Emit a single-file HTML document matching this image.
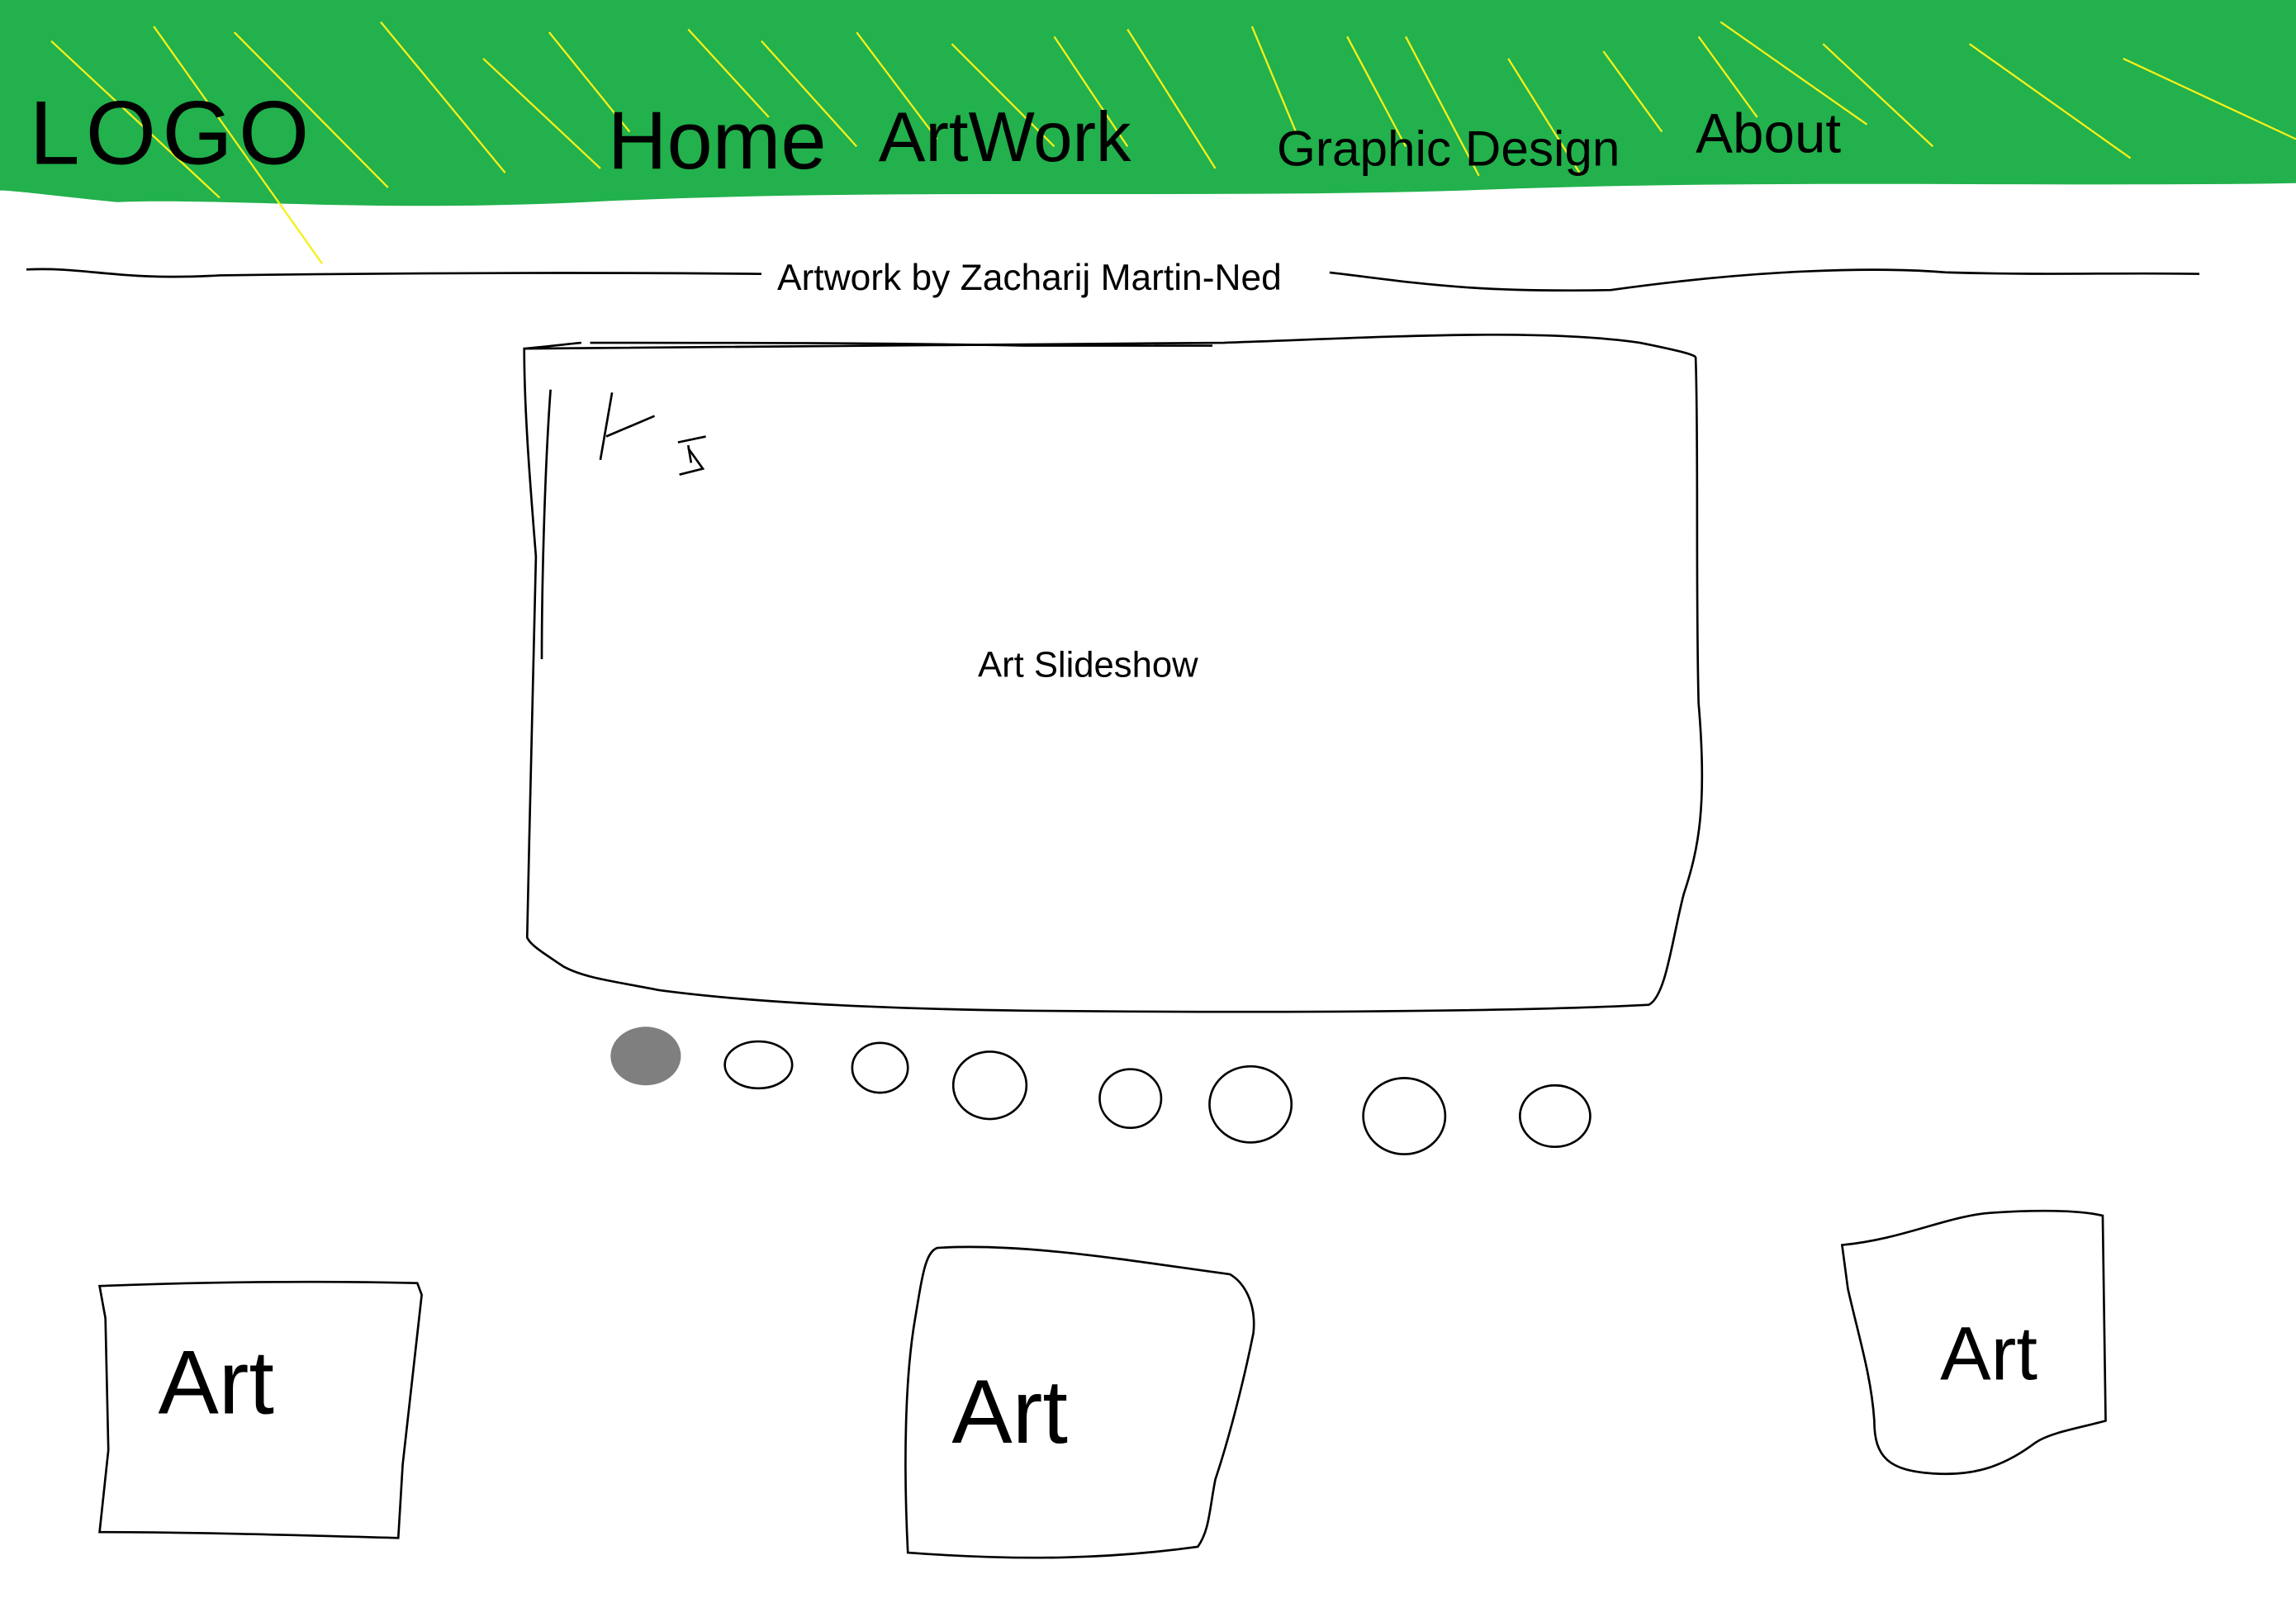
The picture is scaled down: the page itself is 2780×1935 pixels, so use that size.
<!DOCTYPE html>
<html><head><meta charset="utf-8"><style>
html,body{margin:0;padding:0;background:#fff;width:2780px;height:1935px;overflow:hidden}
svg{display:block}
</style></head><body>
<svg width="2780" height="1935" viewBox="0 0 1568 1091" preserveAspectRatio="none" xmlns="http://www.w3.org/2000/svg">
<rect width="1568" height="1091" fill="#fff"/>
<path d="M0 0H1568V125C1400 128 1200 122 1000 130C800 136 600 128 400 138C250 145 150 135 80 138C40 134 10 130 0 130Z" fill="#22b14c"/>
<g stroke="#f5f01a" stroke-width="1.3" fill="none">
<path d="M35 28L150 135"/><path d="M105 18L220 180"/><path d="M160 22L265 128"/><path d="M260 15L345 118"/><path d="M330 40L410 115"/>
<path d="M375 22L430 90"/><path d="M470 20L525 80"/><path d="M520 28L585 100"/><path d="M585 22L640 95"/><path d="M650 30L720 100"/>
<path d="M720 25L770 100"/><path d="M770 20L830 115"/><path d="M855 18L885 90"/><path d="M920 25L960 100"/><path d="M960 25L1010 120"/>
<path d="M1030 40L1080 120"/><path d="M1095 35L1135 90"/><path d="M1160 25L1200 80"/><path d="M1245 30L1320 100"/><path d="M1345 30L1455 108"/>
<path d="M1450 40L1568 95"/><path d="M1175 15L1275 85"/>
</g>
<g font-family="Liberation Sans, sans-serif" fill="#000" font-weight="normal">
<text x="20" y="112" font-size="62" letter-spacing="4">LOGO</text>
<text x="415" y="115" font-size="56">Home</text>
<text x="600" y="110" font-size="48">ArtWork</text>
<text x="872" y="113" font-size="34">Graphic Design</text>
<text x="1158" y="104" font-size="38">About</text>
</g>
<g stroke="#000" stroke-width="1.5" fill="none">
<path d="M18 184C60 182 80 192 150 188C300 186 420 186 520 187"/>
<path d="M908 186C960 192 1000 200 1100 198C1200 184 1280 182 1330 186C1400 188 1450 186 1502 187"/>
<path d="M358 238C380 236 395 234 397 234M403 234C500 234 600 234 700 236C760 236 800 236 828 236M836 234C950 230 1050 224 1120 234C1140 238 1158 242 1158 244C1160 300 1158 400 1160 480C1166 550 1160 580 1150 610C1142 640 1138 680 1126 686C1050 690 900 692 700 690C550 688 480 680 450 676C420 670 400 668 385 660C370 650 362 645 360 640C362 550 364 450 366 380C362 330 358 280 358 238Z"/>
<path d="M376 266C372 320 370 400 370 450"/>
<path d="M418 268L410 314M414 298L447 284M463 302L482 298M470 304L472 316M464 324L480 320L470 306"/>
<path d="M68 878C120 876 200 874 285 876L288 884L275 1000L272 1050C200 1048 130 1046 68 1046L74 990L72 900Z"/>
<path d="M640 852C700 848 780 862 840 870C850 876 858 890 856 910C850 940 840 980 830 1010C826 1030 826 1045 818 1056C760 1064 700 1066 620 1060C617 1000 618 940 625 900C630 870 632 855 640 852Z"/>
<path d="M1258 850C1300 846 1330 830 1360 828C1390 826 1420 826 1436 830L1438 970C1420 975 1400 978 1390 985C1370 1000 1350 1008 1320 1006C1290 1004 1280 995 1280 970C1278 940 1270 915 1262 880Z"/>
<ellipse cx="518" cy="727" rx="23" ry="16"/>
<ellipse cx="601" cy="729" rx="19" ry="17"/>
<ellipse cx="676" cy="741" rx="25" ry="23"/>
<ellipse cx="772" cy="750" rx="21" ry="20"/>
<ellipse cx="854" cy="754" rx="28" ry="26"/>
<ellipse cx="959" cy="762" rx="28" ry="26"/>
<ellipse cx="1062" cy="762" rx="24" ry="21"/>
</g>
<ellipse cx="441" cy="721" rx="24" ry="20" fill="#7f7f7f"/>
<g font-family="Liberation Sans, sans-serif" fill="#000">
<text x="703" y="198" font-size="25" text-anchor="middle">Artwork by Zacharij Martin-Ned</text>
<text x="743" y="462" font-size="24.6" text-anchor="middle">Art Slideshow</text>
<text x="108" y="965" font-size="62">Art</text>
<text x="650" y="985" font-size="62">Art</text>
<text x="1325" y="942" font-size="52">Art</text>
</g>
</svg>
</body></html>
